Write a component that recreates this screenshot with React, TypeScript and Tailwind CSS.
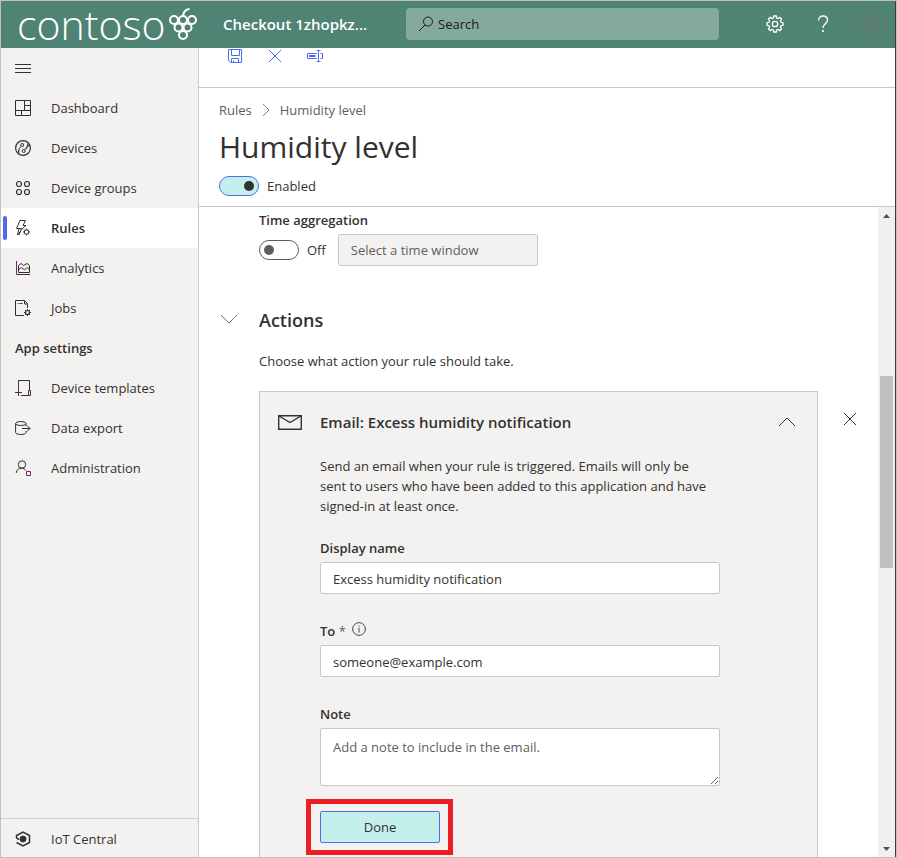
import type { ReactNode } from "react";

type IconProps = { children: ReactNode; className?: string };

function Icon({ children, className = "h-4 w-4" }: IconProps) {
  return (
    <svg viewBox="0 0 16 16" fill="none" stroke="currentColor" strokeWidth="1" className={`shrink-0 ${className}`} aria-hidden="true">
      {children}
    </svg>
  );
}

const icons = {
  dashboard: (
    <Icon>
      <path d="M.5.5h15v15H.5zM9.5.5v10M.5 10.5h15M9.5 5.5h6M6.500 10.500v5" />
    </Icon>
  ),
  devices: (
    <Icon>
      <circle cx="8" cy="8" r="7.4" strokeWidth="1.200" />
      <circle cx="7.200" cy="5" r="1.500" />
      <circle cx="8.700" cy="11" r="1.500" />
      <path d="M6.200 6.200 3.800 9v4.200M9.700 9.800 12 7l1.200-3.800M3 12l1-1.500M14.200 4.500 11 8.800" />
    </Icon>
  ),
  groups: (
    <Icon>
      <g strokeWidth="1.200">
        <circle cx="4" cy="4" r="2.500" />
        <circle cx="12" cy="4" r="2.500" />
        <circle cx="4" cy="12" r="2.500" />
        <circle cx="12" cy="12" r="2.500" />
      </g>
    </Icon>
  ),
  rules: (
    <Icon>
      <path d="M10.500.5H5L1.500 8.500H4L2.500 15l3-3.500M10.500.5 8 5.500h3L6.500 9.500M4 8.500h2.500L4 15" />
      <circle cx="11.500" cy="12" r="2.200" />
      <path d="M11.500 8.500v1.300M11.500 14.200v1.300M8 12h1.300M13.700 12H15M9 9.500l1 1M13 13.500l1 1M14 9.500l-1 1M10 13.500l-1 1" />
    </Icon>
  ),
  analytics: (
    <Icon>
      <path d="M1.500 1v13.500H15" stroke="#742774" />
      <path d="M2 14.500h13M3.500 12.500V5.500L6 3.500l2.500 2L12 3.500l2.500 2v7zM3.500 9.500l3-2 3 2.500L12 7.500l2.500 2" />
    </Icon>
  ),
  jobs: (
    <Icon>
      <path d="M9 15.500H.5V.5h9l3 3V8M9.500.5v3.500h3M2.500 3.500h1M4.500 3.500h3" />
      <circle cx="12.500" cy="12.500" r="2" strokeWidth="1.200" />
      <path d="M12.500 9v1.500M12.500 14.500V16M9 12.500h1.500M14.500 12.500H16M10 10l1 1M14 14l1 1M15 10l-1 1M11 14l-1 1" />
    </Icon>
  ),
  templates: (
    <Icon>
      <path d="M3.500 9V.5h11v10M6 15.500h9.500v-5h-2v5M0 12.500h7M3.500 9v7" />
      <path d="M3.500 2v12M13.500 11v4" stroke="#742774" strokeWidth=".6" />
    </Icon>
  ),
  dataExport: (
    <Icon>
      <ellipse cx="5.800" cy="3.500" rx="5.200" ry="2" />
      <path d="M.6 3.500v9c0 1.300 2.300 2 5.200 2s5.200-.7 5.200-2v-1.500M11 3.500V6M7 8.500h8M12 5.500l3 3-3 3" />
    </Icon>
  ),
  administration: (
    <Icon>
      <circle cx="7" cy="4.500" r="3.700" />
      <path d="M1.200 13c.2-3 2.500-4.800 5.300-4.800 2 0 3.500.8 4.500 2.300" />
      <path d="M11.500 11.500h4v4h-4z" stroke="#742774" />
    </Icon>
  ),
};

function NavItem({ icon, label, active = false }: { icon: ReactNode; label: string; active?: boolean }) {
  return (
    <li>
      <a href="#" aria-current={active ? "page" : undefined} className={active ? "flex h-10 items-center bg-white pl-0.5 font-semibold" : "flex h-10 items-center pl-3.5"}>
        {active && <span className="mr-2 h-6 w-1 rounded-full bg-[#4f6bed]" />}
        {icon}
        <span className="ml-5">{label}</span>
      </a>
    </li>
  );
}

function BrandLogo() {
  return (
    <a href="#" aria-label="contoso" className="flex w-[204px] shrink-0 items-center pl-4">
      <span className="w-[151px] text-[41px] leading-11 font-light">contoso</span>
      <svg viewBox="0 0 30 36" className="h-9 w-[30px]" fill="none" stroke="white" strokeWidth="2" aria-hidden="true">
        <circle cx="6" cy="14" r="4" />
        <circle cx="15" cy="14" r="4" />
        <circle cx="24" cy="14" r="4" />
        <circle cx="10.500" cy="21.500" r="4" />
        <circle cx="19.500" cy="21.500" r="4" />
        <circle cx="15" cy="29" r="4" />
        <path d="M15 10c.5-4 2.500-6.500 6.500-7" />
      </svg>
    </a>
  );
}

function Header() {
  return (
    <header className="flex h-[47px] shrink-0 items-center bg-[#4f8374] pb-px text-white">
      <BrandLogo />
      <span className="ml-[18px] w-[183px] shrink-0 text-[15px] font-semibold">Checkout 1zhopkz...</span>
      <label className="flex h-8 w-[313px] items-center gap-1 rounded-sm bg-[#84a99f] px-3 text-[#1b1a19]">
        <Icon>
          <circle cx="10" cy="5.500" r="4.500" />
          <path d="M7 9 1 15" />
        </Icon>
        <input type="search" aria-label="Search" placeholder="Search" className="min-w-0 flex-1 bg-transparent outline-none placeholder:text-[#1b1a19]" />
      </label>
      <div className="ml-auto flex items-center">
        <button type="button" aria-label="Settings" className="flex w-12 justify-center">
          <svg viewBox="0 0 18 18" className="h-[18px] w-[18px]" fill="none" stroke="white" strokeWidth="1.300" aria-hidden="true">
            <circle cx="9" cy="9" r="2.700" />
            <path d="M7.700 1h2.600l.4 2 1.300.6 1.800-1.200 1.800 1.800-1.200 1.800.6 1.300 2 .4v2.600l-2 .4-.6 1.300 1.200 1.800-1.800 1.800-1.800-1.200-1.300.6-.4 2H7.700l-.4-2-1.300-.6-1.800 1.200-1.800-1.800L3.600 12 3 10.700l-2-.4V7.700l2-.4L3.600 6 2.400 4.200l1.800-1.800L6 3.600 7.300 3z" />
          </svg>
        </button>
        <button type="button" aria-label="Help" className="flex w-12 justify-center">
          <svg viewBox="0 0 12 18" className="h-[18px] w-3" fill="none" stroke="white" strokeWidth="1.300" aria-hidden="true">
            <path d="M1.500 5.500C1.500 2.500 3.500 1 6 1s4.500 1.500 4.500 4c0 3.500-4.500 4-4.500 8" />
            <path d="M6 15v2" strokeWidth="1.600" />
          </svg>
        </button>
        <button type="button" aria-label="Account" className="flex w-12 justify-center">
          <svg viewBox="0 0 32 32" className="h-8 w-8" fill="none" stroke="#6f7772" aria-hidden="true">
            <circle cx="16" cy="16" r="15" />
            <path d="M10.500 10.500h11v13h-11zM12 7l4 4 4-4M13 21v-3h6v3z" />
            <circle cx="16" cy="15.500" r="2" />
          </svg>
        </button>
      </div>
    </header>
  );
}

function Sidebar() {
  return (
    <nav className="flex w-[198px] shrink-0 flex-col border-r border-[#c8c8c8] bg-[#f3f2f1]">
      <button type="button" aria-label="Collapse navigation" className="flex h-10 items-center pl-3.5">
        <Icon>
          <path d="M0 4.500h16M0 8.500h16M0 12.500h16" />
        </Icon>
      </button>
      <ul>
        <NavItem icon={icons.dashboard} label="Dashboard" />
        <NavItem icon={icons.devices} label="Devices" />
        <NavItem icon={icons.groups} label="Device groups" />
        <NavItem icon={icons.rules} label="Rules" active />
        <NavItem icon={icons.analytics} label="Analytics" />
        <NavItem icon={icons.jobs} label="Jobs" />
      </ul>
      <h2 className="flex h-10 items-center pl-3.5 font-semibold">App settings</h2>
      <ul>
        <NavItem icon={icons.templates} label="Device templates" />
        <NavItem icon={icons.dataExport} label="Data export" />
        <NavItem icon={icons.administration} label="Administration" />
      </ul>
      <a href="#" className="mt-auto flex h-[39px] items-center border-t border-[#d2d0ce] pt-0.5 pl-3.5">
        <Icon>
          <path d="M1.500 7V4.500L8 1l6.500 3.500v7L8 15l-6.500-3.500M1.500 7l2.500 1.500" strokeWidth="1.500" />
          <circle cx="8" cy="8" r="3" fill="currentColor" />
        </Icon>
        <span className="ml-5">IoT Central</span>
      </a>
    </nav>
  );
}

function Toolbar() {
  return (
    <div className="flex h-10 shrink-0 items-start gap-6 border-b border-[#c8c8c8] pl-7 text-[#4f6bed]">
      <button type="button" aria-label="Save">
        <Icon>
          <path d="M1.500 1.500h13v13h-11l-2-2zM4.500 1.500v6h8v-6M4.500 14.500v-4h7v4M6.500 14.500v-2" />
        </Icon>
      </button>
      <button type="button" aria-label="Cancel">
        <Icon>
          <path d="m2 2 12 12M14 2 2 14" />
        </Icon>
      </button>
      <button type="button" aria-label="Rename">
        <Icon>
          <path d="M10 5.500H.5v5H10M13.500 5.500h2v5h-2M9.500 2.500h4M9.500 13.500h4M11.500 2.500v11" />
          <path d="M2 8h6.500" strokeWidth="2" />
        </Icon>
      </button>
    </div>
  );
}

function Toggle({ label, on = false }: { label: string; on?: boolean }) {
  return (
    <label className="flex items-center gap-2">
      <input type="checkbox" role="switch" defaultChecked={on} className="peer sr-only" />
      <span className="flex h-5 w-10 items-center rounded-full border border-[#605e5c] bg-white px-1 text-[#605e5c] peer-checked:justify-end peer-checked:border-[#4f6bed] peer-checked:bg-[#c3f0ea] peer-checked:text-[#323130]">
        <span className="h-2.5 w-2.5 rounded-full bg-current" />
      </span>
      {label}
    </label>
  );
}

const fieldClass = "block w-[400px] rounded-xs border border-[#c8c8c8] bg-white px-3 outline-none placeholder:text-[#605e5c]";

function EmailCard() {
  return (
    <section className="w-[559px] shrink-0 border border-[#c8c8c8] bg-[#f3f2f1] pt-5 pr-[22px] pb-5 pl-[18px]">
      <div className="flex h-5 items-center">
        <svg viewBox="0 0 24 15" className="mr-[18px] h-[15px] w-6" fill="none" stroke="#323130" aria-hidden="true">
          <path d="M.7.7h22.600v13.600H.7z" strokeWidth="1.400" />
          <path d="m1 1 11 6.500L23 1" strokeWidth="1.400" />
        </svg>
        <h3 className="text-[15px] font-semibold">Email: Excess humidity notification</h3>
        <button type="button" aria-label="Collapse" className="ml-auto">
          <Icon>
            <path d="m0 12 8-8 8 8" />
          </Icon>
        </button>
      </div>
      <div className="w-[438px] pl-[42px]">
        <p className="mt-6">Send an email when your rule is triggered. Emails will only be sent to users who have been added to this application and have signed-in at least once.</p>
        <label htmlFor="display-name" className="mt-[22px] mb-1 block font-semibold">Display name</label>
        <input id="display-name" defaultValue="Excess humidity notification" className={`${fieldClass} h-8 pt-0.5`} />
        <div className="mt-[27px] mb-1 flex h-5 items-start">
          <label htmlFor="to" className="font-semibold">
            To <span className="font-normal text-[#605e5c]">*</span>
          </label>
          <Icon className="mt-px ml-1.5 h-3.5 w-3.5">
            <circle cx="8" cy="8" r="7.300" />
            <path d="M8 6.500V12M8 4v1.200" />
          </Icon>
        </div>
        <input id="to" required defaultValue="someone@example.com" className={`${fieldClass} h-8 pt-0.5`} />
        <label htmlFor="note" className="mt-[27px] mb-1 block font-semibold">Note</label>
        <textarea id="note" placeholder="Add a note to include in the email." className={`${fieldClass} h-[58px] resize py-2`} />
      </div>
      <div className="mt-[13px] ml-7 w-fit border-5 border-[#ee1c25] py-[7px] pr-2 pl-[9px]">
        <button type="button" className="block h-8 w-[120px] rounded-xs border border-[#4f6bed] bg-[#c3f0ea]">Done</button>
      </div>
    </section>
  );
}

function Scrollbar() {
  return (
    <div className="flex w-[17px] shrink-0 flex-col items-center bg-[#f0f0f0] text-[#505050]" aria-hidden="true">
      <svg viewBox="0 0 17 17" className="h-[17px] w-[17px]" fill="currentColor">
        <path d="M5 11h7L8.500 7z" />
      </svg>
      <div className="h-[152px]" />
      <div className="h-48 w-[13px] bg-[#c1c1c1]" />
      <svg viewBox="0 0 17 17" className="mt-auto h-[17px] w-[17px]" fill="currentColor">
        <path d="M5 7h7l-3.500 4z" />
      </svg>
    </div>
  );
}

export default function App() {
  return (
    <div className="flex h-screen flex-col border border-[#c0c0c0] bg-white font-['Open_Sans','Noto_Sans',sans-serif] text-[13px] leading-5 text-[#323130]">
      <div className="flex min-h-0 flex-1 flex-col border-r border-[#3b3b3b]">
        <Header />
        <div className="flex min-h-0 flex-1">
          <Sidebar />
          <main className="flex min-w-0 flex-1 flex-col">
            <Toolbar />
            <div className="shrink-0 border-b border-[#c8c8c8] px-5 pt-3 pb-2.5">
              <nav aria-label="Breadcrumb" className="flex items-center text-[#605e5c]">
                <a href="#">Rules</a>
                <Icon className="mx-2 h-3 w-3">
                  <path d="m4 0 8 8-8 8" />
                </Icon>
                <a href="#">Humidity level</a>
              </nav>
              <h1 className="mt-[7px] mb-[9px] text-[30px] leading-10">Humidity level</h1>
              <Toggle label="Enabled" on />
            </div>
            <div className="flex min-h-0 flex-1">
              <div className="min-w-0 flex-1 overflow-hidden pl-5">
                <div className="pt-[3px] pl-10">
                  <h2 className="font-semibold">Time aggregation</h2>
                  <div className="mt-1 flex items-center gap-3">
                    <Toggle label="Off" />
                    <select disabled aria-label="Time window" className="h-8 w-[200px] appearance-none rounded-xs border border-[#c8c8c8] bg-[#f3f2f1] px-3 text-[#605e5c] opacity-100">
                      <option>Select a time window</option>
                    </select>
                  </div>
                </div>
                <div className="mt-10 flex h-7 items-center">
                  <button type="button" aria-label="Collapse actions" className="w-10 pl-0.5 text-[#8a6a48]">
                    <Icon>
                      <path d="m0 3 8 8 8-8" />
                    </Icon>
                  </button>
                  <h2 className="text-lg font-semibold">Actions</h2>
                </div>
                <div className="pl-10">
                  <p className="mt-[17px] mb-5">Choose what action your rule should take.</p>
                  <div className="flex items-start">
                    <EmailCard />
                    <button type="button" aria-label="Remove action" className="mt-5 ml-6">
                      <Icon>
                        <path d="m2 2 12 12M14 2 2 14" />
                      </Icon>
                    </button>
                  </div>
                </div>
              </div>
              <Scrollbar />
            </div>
          </main>
        </div>
      </div>
    </div>
  );
}
